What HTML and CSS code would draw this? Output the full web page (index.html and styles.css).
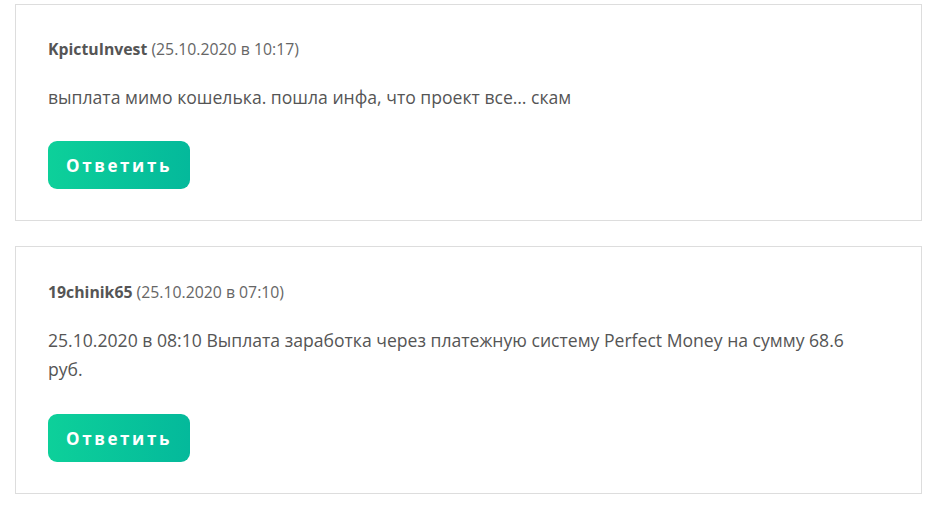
FILE: index.html
```html
<!DOCTYPE html>
<html lang="ru">
<head>
<meta charset="utf-8">
<link rel="stylesheet" href="styles.css">
</head>
<body>
<div class="list">
  <div class="comment">
    <div class="meta"><span class="author">KpictuInvest</span> <span class="date">(25.10.2020 в 10:17)</span></div>
    <p class="text">выплата мимо кошелька. пошла инфа, что проект все… скам</p>
    <button class="reply">Ответить</button>
  </div>
  <div class="comment second">
    <div class="meta"><span class="author">19chinik65</span> <span class="date">(25.10.2020 в 07:10)</span></div>
    <p class="text">25.10.2020 в 08:10 Выплата заработка через платежную систему Perfect Money на сумму 68.6 руб.</p>
    <button class="reply">Ответить</button>
  </div>
</div>
</body>
</html>
```
FILE: styles.css
```css
html, body {
  margin: 0;
  padding: 0;
  background: #fff;
}
body {
  font-family: "Open Sans", "Noto Sans", sans-serif;
  color: #555;
}
.list {
  padding: 4px 0 0 15px;
  width: 907px;
  display: flex;
  flex-direction: column;
  gap: 25px;
}
.comment {
  border: 1px solid #ddd;
  padding: 30px 32px 31px;
  display: flex;
  flex-direction: column;
  align-items: flex-start;
}
.second {
  padding-top: 31px;
}
.meta {
  font-size: 15.8px;
  line-height: 28px;
  color: #666;
}
.author {
  font-weight: 700;
  color: #555;
}
.text {
  max-width: 830px;
  margin: 20px 0 29px;
  font-size: 17.6px;
  line-height: 29px;
  color: #555;
}
.second .text {
  margin-top: 20px;
  margin-bottom: 30px;
}
.reply {
  width: 142px;
  height: 48px;
  border: 0;
  border-radius: 9px;
  background: linear-gradient(90deg, #0dd09a, #04b99b);
  color: #fff;
  font-family: "Open Sans", sans-serif;
  font-weight: 700;
  font-size: 17px;
  letter-spacing: 2.6px;
  padding: 0;
}
```
